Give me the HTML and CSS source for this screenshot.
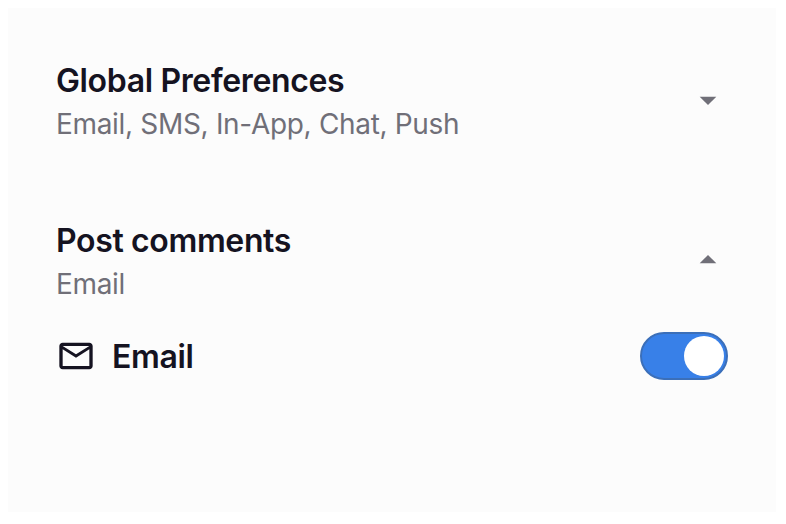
FILE: index.html
```html
<!DOCTYPE html>
<html lang="en">
<head>
<meta charset="utf-8">
<title>Preferences</title>
<link rel="stylesheet" href="styles.css">
</head>
<body>
<main class="panel">
  <section class="group">
    <header class="group-header">
      <div>
        <h2 class="title">Global Preferences</h2>
        <p class="channels">Email, SMS, In-App, Chat, Push</p>
      </div>
      <svg class="caret" width="40" height="40" viewBox="0 0 24 24"><path d="m7 10 5 5 5-5z"/></svg>
    </header>
  </section>
  <section class="group">
    <header class="group-header">
      <div>
        <h2 class="title">Post comments</h2>
        <p class="channels">Email</p>
      </div>
      <svg class="caret" width="40" height="40" viewBox="0 0 24 24"><path d="m7 14 5-5 5 5z"/></svg>
    </header>
    <div class="row">
      <svg class="mail" width="40" height="40" viewBox="0 0 24 24"><path d="M22 6c0-1.1-.9-2-2-2H4c-1.1 0-2 .9-2 2v12c0 1.1.9 2 2 2h16c1.1 0 2-.9 2-2V6zm-2 0-8 5-8-5h16zm0 12H4V8l8 5 8-5v10z"/></svg>
      <span class="label">Email</span>
      <button class="toggle" aria-label="Email"><span class="knob"></span></button>
    </div>
  </section>
</main>
</body>
</html>
```
FILE: styles.css
```css
* { box-sizing: border-box; }
body { margin: 8px 10px 12px 8px; background: #fff; font-family: Inter, "Liberation Sans", sans-serif; }
.panel { height: 504px; padding: 48px; background: #fcfcfc; }
.group { margin-bottom: 72px; }
.group-header { display: flex; justify-content: space-between; align-items: center; height: 88px; }
.title { margin: 0; padding-top: 2px; font-size: 32px; line-height: 46px; font-weight: 600; letter-spacing: -0.36px; color: #151321; white-space: nowrap; }
.channels { margin: 0; padding-top: 1px; font-size: 28px; line-height: 39px; color: #706f78; letter-spacing: -0.32px; white-space: nowrap; }
.caret { fill: #706f78; }
.row { display: flex; align-items: center; height: 48px; margin-top: 28px; }
.mail { fill: #151321; }
.label { margin-left: 16px; padding-top: 2px; font-size: 32px; line-height: 48px; font-weight: 600; letter-spacing: -0.36px; color: #151321; }
.toggle { display: flex; justify-content: flex-end; align-items: center; width: 88px; height: 48px; margin-left: auto; padding: 0 2px; border: 2px solid #3b6fb9; border-radius: 24px; background: #3880e8; }
.knob { width: 40px; height: 40px; border-radius: 50%; background: #fff; }
```
